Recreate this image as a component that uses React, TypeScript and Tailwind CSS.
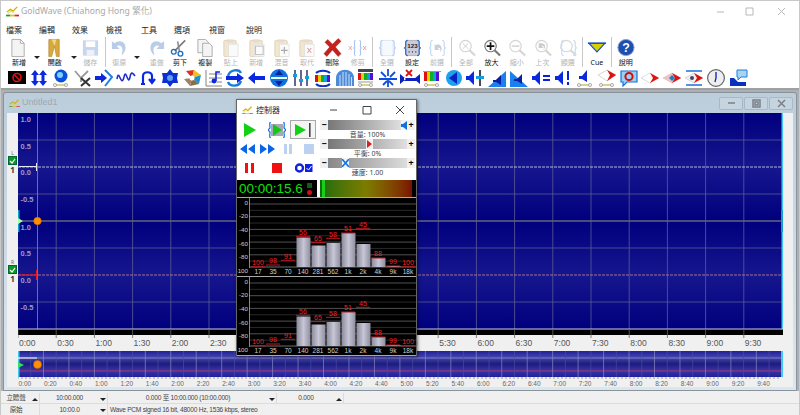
import type { ReactNode } from 'react';

const Logo = ({ size = 12 }: { size?: number }) => (
  <svg width={size} height={size * 0.8} viewBox="0 0 15 12">
    <path d="M1 7 L5 4 L8 6 L13 1" stroke="#d8b000" strokeWidth="1.6" fill="none" />
    <path d="M2 9 L6 6 L9 8" stroke="#e8d040" strokeWidth="1" fill="none" />
    <rect x="0" y="10" width="5" height="2" fill="#1fa01f" />
    <rect x="5" y="10" width="5" height="2" fill="#e8c000" />
    <rect x="10" y="10" width="5" height="2" fill="#e02020" />
  </svg>
);

const Page = ({ c = '#888', f = '#fff' }: { c?: string; f?: string }) => (
  <path d="M3 1 H12 L16 5 V19 H3 Z M12 1 V5 H16" fill={f} stroke={c} strokeWidth="0.8" />
);

const Clip = ({ inner }: { inner?: ReactNode }) => (
  <g>
    <rect x="3" y="2" width="13" height="17" rx="1" fill="#f1e6cf" stroke="#e0d4bb" />
    <rect x="6" y="1" width="7" height="3" fill="#e4dccb" />
    <rect x="8" y="6" width="10" height="13" fill="#fafafa" stroke="#ddd" strokeWidth="0.7" />
    {inner}
  </g>
);

const Braces = ({ c }: { c: string }) => (
  <path d="M6 2 C3 2 4 5 4 8 C4 10 2 10 2 10 C2 10 4 10 4 12 C4 15 3 18 6 18 M16 2 C19 2 18 5 18 8 C18 10 20 10 20 10 C20 10 18 10 18 12 C18 15 19 18 16 18" fill="none" stroke={c} strokeWidth="1.2" />
);

const Lens = ({ c, inner }: { c: string; inner?: ReactNode }) => (
  <g>
    <line x1="13" y1="12" x2="19" y2="18" stroke={c} strokeWidth="2.2" />
    <circle cx="9" cy="8" r="6" fill="#fff" stroke={c} strokeWidth="1.2" />
    {inner}
  </g>
);

const tools: { label: string; off?: boolean; icon?: ReactNode; kind?: string; w?: string }[] = [
  { label: '新增', w: 'w-[25.4px]', icon: <Page c="#999" f="#f4f4f4" /> },
  { kind: 'dd', label: '', w: 'w-[10.3px]' },
  { label: '開啟', w: 'w-[25.4px]', icon: <g><path d="M4 1 H15 V19 H12 L10 8 L7 19 H4 Z" fill="#d9a93c" stroke="#a87e22" strokeWidth="0.6" /><path d="M7 1 L10 8 L12 1" fill="#f2d78a" /></g> },
  { kind: 'dd', label: '', w: 'w-[12.4px]' },
  { label: '儲存', off: true, w: 'w-[21px]', icon: <g><rect x="2" y="2" width="16" height="16" fill="#c6d6ee" /><rect x="5" y="3" width="10" height="6" fill="#fff" /><rect x="6" y="12" width="8" height="6" fill="#eef2f8" /></g> },
  { kind: 'sep', label: '', w: 'w-[9.5px]' },
  { label: '復原', off: true, w: 'w-[18px]', icon: <path d="M2 3 V11 H10 L7 8 C10 6 14 8 13 14 L12 18 C18 14 18 4 11 3 C8 3 6 4 5 5 Z" fill="#b9cce8" /> },
  { kind: 'dd', label: '', w: 'w-[18px]' },
  { label: '重做', off: true, w: 'w-[21px]', icon: <path d="M18 3 V11 H10 L13 8 C10 6 6 8 7 14 L8 18 C2 14 2 4 9 3 C12 3 14 4 15 5 Z" fill="#b9cce8" /> },
  { label: '剪下', w: 'w-[25.4px]', icon: <g><line x1="5" y1="13" x2="16" y2="2" stroke="#777" strokeWidth="1.6" /><line x1="10" y1="14" x2="8" y2="3" stroke="#888" strokeWidth="1.6" /><circle cx="4" cy="14" r="2.5" fill="none" stroke="#1c6fc0" strokeWidth="1.4" /><circle cx="11" cy="16" r="2.5" fill="none" stroke="#1c6fc0" strokeWidth="1.4" /></g> },
  { label: '複製', w: 'w-[25.4px]', icon: <g><path d="M2 1 H10 L13 4 V15 H2 Z" fill="#f4f4f4" stroke="#999" strokeWidth="0.8" /><path d="M7 5 H14 L17 8 V19 H7 Z" fill="#f4f4f4" stroke="#999" strokeWidth="0.8" /></g> },
  { label: '貼上', off: true, w: 'w-[25.4px]', icon: <Clip /> },
  { label: '新增', off: true, w: 'w-[25.4px]', icon: <Clip inner={<rect x="9" y="8" width="8" height="9" fill="none" stroke="#bbb" />} /> },
  { label: '混音', off: true, w: 'w-[25.4px]', icon: <Clip inner={<path d="M13 9 V16 M9.5 12.5 H16.5" stroke="#aaa" strokeWidth="1.2" />} /> },
  { label: '取代', off: true, w: 'w-[25.4px]', icon: <Clip inner={<path d="M11 10 L15 15 M15 10 L11 15" stroke="#e0a0a0" strokeWidth="1.2" />} /> },
  { label: '刪除', w: 'w-[25.4px]', icon: <path d="M2 4 L5 1 L10 6 L16 0 L19 3 L13 9 L19 16 L16 19 L10 12 L4 19 L1 16 L7 9 Z" fill="#c8201c" stroke="#8a1410" strokeWidth="0.4" /> },
  { label: '修剪', off: true, w: 'w-[25.4px]', icon: <g><path d="M8 2 C6 2 7 6 7 9 L6 10 L7 11 C7 14 6 18 8 18 M12 2 C14 2 13 6 13 9 L14 10 L13 11 C13 14 14 18 12 18" fill="none" stroke="#a8c4ee" strokeWidth="1.2" /><path d="M1 8 L4 12 M4 8 L1 12 M16 8 L19 12 M19 8 L16 12" stroke="#eaa0a0" strokeWidth="1" /></g> },
  { kind: 'sep', label: '', w: 'w-[4px]' },
  { label: '全選', off: true, w: 'w-[25px]', icon: <g><rect x="5" y="2" width="12" height="16" fill="#f6f9fd" stroke="#dde6f4" /><Braces c="#b8d0f0" /></g> },
  { label: '設定', w: 'w-[25px]', icon: <g><rect x="4" y="2" width="14" height="16" rx="1" fill="#ccd" stroke="#778" strokeWidth="0.5" /><text x="11" y="10" textAnchor="middle" fontSize="6.5" fontWeight="700" fill="#223" fontFamily="Liberation Sans">123</text><path d="M7 14 H8 M10.5 14 H11.5 M14 14 H15" stroke="#223" strokeWidth="1.4" /><Braces c="#1768d8" /></g> },
  { label: '前選', off: true, w: 'w-[25px]', icon: <g><path d="M8 6 V12 H13 L11 10 C13 9 15 11 14 15 C17 11 15 6 11 6 L10 7 Z" fill="#c9cfd8" /><Braces c="#c4d8f4" /></g> },
  { kind: 'sep', label: '', w: 'w-[4px]' },
  { label: '全部', off: true, w: 'w-[25.4px]', icon: <Lens c="#d4d4d4" inner={<path d="M6 5 L12 11 M12 5 L6 11" stroke="#ccc" strokeWidth="1" />} /> },
  { label: '放大', w: 'w-[25.4px]', icon: <Lens c="#777" inner={<path d="M9 4 V12 M5 8 H13" stroke="#111" strokeWidth="1.8" />} /> },
  { label: '縮小', off: true, w: 'w-[25.4px]', icon: <Lens c="#d4d4d4" inner={<path d="M5 8 H13" stroke="#ccc" strokeWidth="1.4" />} /> },
  { label: '上次', off: true, w: 'w-[25.4px]', icon: <Lens c="#d4d4d4" inner={<path d="M6 5 V10 H11 L9 8 C11 7 12 9 11 12 C14 9 13 5 9 5 Z" fill="#ccc" />} /> },
  { label: '顯選', off: true, w: 'w-[25.4px]', icon: <g><Lens c="#d8d8d8" /><Braces c="#c8daf4" /></g> },
  { kind: 'sep', label: '', w: 'w-[4px]' },
  { label: 'Cue', w: 'w-[25px]', icon: <g><path d="M2 5 H19 L10.5 14 Z" fill="#d8d000" stroke="#1a50c8" strokeWidth="1.2" /><path d="M1 5 H20" stroke="#1a50c8" strokeWidth="1.6" /></g> },
  { kind: 'sep', label: '', w: 'w-[4px]' },
  { label: '說明', w: 'w-[25px]', icon: <g><circle cx="10.5" cy="9.5" r="8.5" fill="#1c4fb0" stroke="#8aa0c8" /><text x="10.5" y="14" textAnchor="middle" fontSize="13" fontWeight="700" fill="#fff" fontFamily="Liberation Sans">?</text></g> },
];

const B = '#0a28e0';
const Spk = ({ x = 3 }: { x?: number }) => <path d={`M${x} 7 H${x + 3} L${x + 8} 2 V16 L${x + 3} 11 H${x} Z`} fill={B} />;
const Base = () => <g><line x1="4" y1="16" x2="15" y2="16" stroke="#c8c060" strokeWidth="1.4" /><circle cx="4" cy="16" r="1.6" fill="#eee" stroke="#888" strokeWidth="0.6" /><circle cx="15" cy="16" r="1.6" fill="#eee" stroke="#888" strokeWidth="0.6" /></g>;
const Rainbow = ({ y = 5, h = 6 }: { y?: number; h?: number }) => (
  <g>
    <rect x="2" y={y} width="3" height={h} fill="#e01010" />
    <rect x="5" y={y} width="3" height={h} fill="#e8d000" />
    <rect x="8" y={y} width="3" height={h} fill="#10b020" />
    <rect x="11" y={y} width="3" height={h} fill="#10a0e0" />
    <rect x="14" y={y} width="3" height={h} fill="#5010d0" />
  </g>
);
const Diamond = ({ a, b }: { a: string; b: string }) => <g><path d="M1 9 L10 4 L19 9 L10 14 Z" fill={a} stroke="#bbb" strokeWidth="0.5" /><path d="M10 4 L19 9 L10 14 L13 9 Z" fill={b} /></g>;

const strip: ReactNode[] = [
  <g><rect x="1" y="2" width="18" height="13" fill="#000" /><circle cx="10" cy="8.5" r="4" fill="none" stroke="#e01010" strokeWidth="1.6" /><path d="M7.5 6 L12.5 11" stroke="#e01010" strokeWidth="1.6" /></g>,
  <g><path d="M6 1 L10 6 H7.5 V12 H10 L6 17 L2 12 H4.5 V6 H2 Z M14 1 L18 6 H15.5 V12 H18 L14 17 L10 12 H12.5 V6 H10 Z" fill={B} /></g>,
  <g><circle cx="10" cy="7" r="6.5" fill="#0a50e0" /><circle cx="9" cy="6" r="3" fill="#80d0ff" /><Base /></g>,
  <g><path d="M3 2 L9 9 L16 2 M9 9 V13" stroke="#999" strokeWidth="1.8" fill="none" /><path d="M9 9 L18 17 M18 9 L9 17" stroke="#333" strokeWidth="2" /></g>,
  <g><path d="M1 7 H7 V4 L13 9 L7 14 V11 H1 Z" fill={B} /><path d="M11 1 L18 8 L11 17" stroke="#2080e0" strokeWidth="2" fill="none" /></g>,
  <path d="M1 10 C3 -2 5 20 8 8 C10 -2 12 18 14 8 C15 2 17 4 19 7" stroke="#2030c8" strokeWidth="1.6" fill="none" />,
  <path d="M5 15 V7 C5 2 14 2 14 7 V12 M11 10 L14 14 L17 10 M3 15 H7" stroke={B} strokeWidth="2.2" fill="none" />,
  <g><path d="M10 0 L13 4 L18 4 L17 9 L18 14 L13 14 L10 18 L7 14 L2 14 L3 9 L2 4 L7 4 Z" fill="#0a30d0" /><circle cx="10" cy="9" r="3" fill="#60a0f0" /></g>,
  <g><path d="M10 9 L4 2 L12 1 Z" fill="#e03020" /><path d="M10 9 L12 1 L19 6 Z" fill="#f0c020" /><path d="M10 9 L19 6 L17 15 Z" fill="#2090d0" /><path d="M10 9 L17 15 L8 17 Z" fill="#807050" /><path d="M10 9 L8 17 L2 10 Z" fill="#a08060" /><circle cx="10" cy="9" r="2.5" fill="#fff" /></g>,
  <g><path d="M2 1 V17 H18 M5 5 H18 M5 9 H18 M5 13 H18" stroke="#666" strokeWidth="0.8" fill="none" /><circle cx="10" cy="12" r="2.4" fill={B} /><path d="M12 12 V3 H16" stroke={B} strokeWidth="1.6" fill="none" /></g>,
  <g><path d="M3 7 C5 0 14 0 16 4 M16 12 C14 18 5 18 3 13" stroke="#1080e0" strokeWidth="2.4" fill="none" /><path d="M1 7 H12 V4 L19 9 L12 14 V11 H1 Z" fill={B} /></g>,
  <path d="M1 9 L8 3 V7 H18 V11 H8 V15 Z" fill={B} />,
  <g><circle cx="10" cy="9" r="9" fill="#1070e0" /><path d="M10 1 L14 6 H6 Z M10 17 L14 12 H6 Z" fill="#0a20a0" /><rect x="2" y="8" width="16" height="2" fill="#dff" /></g>,
  <g><path d="M4 1 V17 M10 1 V17 M16 1 V17" stroke="#202860" strokeWidth="1.4" /><rect x="2" y="5" width="4" height="3" fill="#10a0e0" /><rect x="8" y="10" width="4" height="3" fill="#10a0e0" /><rect x="14" y="7" width="4" height="3" fill="#10a0e0" /></g>,
  <g><path d="M3 4 C6 1 14 1 17 4 M3 15 C6 18 14 18 17 15" stroke="#1030c0" strokeWidth="2" fill="none" /><Rainbow y={6} h={7} /></g>,
  <g><path d="M1 17 V9 C1 -2 19 -2 19 9 V17 Z" fill="#4a8ad8" /><path d="M5 17 V6 M8 17 V3 M11 17 V3 M14 17 V5 M16.5 17 V8" stroke="#dfeaff" strokeWidth="0.9" /></g>,
  <g><rect x="2" y="0" width="15" height="3" fill="#445" /><Rainbow y={4} h={7} /><path d="M2 13 H17" stroke="#999" /><Base /></g>,
  <path d="M10 0 V7 M3 3 L8 8 M17 3 L12 8 M1 10 H19 M10 11 V18 M5 16 L9 12 M15 16 L11 12" stroke="#1050d8" strokeWidth="1.8" />,
  <g><path d="M0 5 V15 L6 10 Z M20 5 V15 L14 10 Z M4 9 H16 V12 H4 Z" fill="#0a20c0" /><path d="M6 1 L12 7 M12 1 L6 7" stroke="#e01010" strokeWidth="1.8" /></g>,
  <g><rect x="1" y="2" width="18" height="1" fill="#999" /><Rainbow y={3} h={9} /><Base /></g>,
  <g><circle cx="10" cy="9" r="8" fill="#1ca0f0" /><path d="M5 9 L13 3 V15 Z" fill="#0a20c0" /></g>,
  <g><Spk x={0} /><path d="M14 1 V17" stroke="#334" strokeWidth="1.8" /><rect x="10" y="7" width="8" height="3" fill="#10a0e0" /></g>,
  <g><path d="M1 18 L19 2 V18 Z" fill="#1a80f0" /><path d="M6 11 H9 L14 6 V16 L9 13 H6 Z" fill="#0a20a0" /></g>,
  <g><path d="M1 2 L19 18 H1 Z" fill="#1a80f0" /><path d="M5 10 H8 L13 5 V15 L8 12 H5 Z" fill="#0a20a0" /></g>,
  <g><Spk x={1} /><path d="M12 7 H19 M12 11 H19" stroke="#0a20e0" strokeWidth="1.8" /></g>,
  <g><Spk x={2} /><path d="M15 2 V11 M15 13 V16" stroke="#0a20e0" strokeWidth="2" /></g>,
  <g><path d="M4 7 H7 L12 1 V13 L7 10 H4 Z" fill={B} /><Base /></g>,
  <g><path d="M1 6 L10 1 L19 6 L10 12 Z" fill="#fff" stroke="#aaa" strokeWidth="0.5" /><path d="M10 1 L19 6 L10 12 L13 6 Z" fill="#e01010" /><Base /></g>,
  <g><path d="M2 2 H18 V13 H8 L4 17 V13 H2 Z" fill="#9ad0f4" stroke="#1a70d8" strokeWidth="1.2" /><circle cx="10" cy="7.5" r="3.6" fill="none" stroke="#d01010" strokeWidth="2" /></g>,
  <Diamond a="#fff" b="#e01010" />,
  <g><Diamond a="#f4c0c0" b="#e01010" /><path d="M7 9 L10 6 L13 9 L10 12 Z" fill="#2080c0" /></g>,
  <g><path d="M2 2 H18 M2 16 H18" stroke="#1a70e0" strokeWidth="1.4" /><Diamond a="#eee" b="#e01010" /><circle cx="8" cy="9" r="2" fill="#446" /></g>,
  <g><circle cx="10" cy="9" r="8.4" fill="#eee" stroke="#666" strokeWidth="1.2" /><path d="M10 3 V9 L9 13" stroke="#1030c0" strokeWidth="1.4" fill="none" /></g>,
  <g><path d="M9 1 H19 V8 H13 L10 11 V8 H9 Z" fill="#a8d4f4" stroke="#1a80d8" /><path d="M2 9 V17 H18 V13 H10 L6 9 Z" fill="#0a30c0" /></g>,
];

const Tri = ({ up }: { up?: boolean }) => (
  <span className={`inline-block w-0 h-0 border-x-[3px] border-x-transparent ${up ? 'border-b-[3px] border-b-[#222]' : 'border-t-[3px] border-t-[#222]'}`} />
);

function Toolbar() {
  return (
    <div className="flex h-[31px] pl-[5.3px] items-start">
      {tools.map((t, i) => {
        if (t.kind === 'sep') return <div key={i} className={`${t.w} h-[30px] flex justify-center`}><div className="w-px h-full bg-[#c8c8c8]" /></div>;
        if (t.kind === 'dd') return <div key={i} className={`${t.w} h-[22px] flex items-end justify-center`}><Tri /></div>;
        return (
          <div key={i} className={`${t.w} flex flex-col items-center`}>
            <svg width="19" height="20" viewBox="0 0 20 20" className="shrink-0 mt-px">{t.icon}</svg>
            <span className={`text-[7px] leading-[9px] whitespace-nowrap ${t.off ? 'text-[#b4b4b4]' : 'text-[#111]'}`}>{t.label}</span>
          </div>
        );
      })}
    </div>
  );
}

const menuItems: [string, string][] = [
  ['檔案', 'w-[33px]'], ['編輯', 'w-[33px]'], ['效果', 'w-[34px]'], ['檢視', 'w-[35px]'],
  ['工具', 'w-[33px]'], ['選項', 'w-[35px]'], ['視窗', 'w-[37px]'], ['說明', 'w-[33px]'],
];

// main wave display, coordinates are page pixels
function WaveView() {
  const cols = Array.from({ length: 21 }, (_, i) => 18 + i * 38.2);
  const rows = [140, 194, 248, 302];
  const scale: [string, number][] = [['1.0', 122], ['0.5', 148.5], ['0.0', 175], ['-0.5', 202], ['1.0', 229.5], ['0.5', 256], ['0.0', 283], ['-0.5', 310]];
  const times = ['0:00', '0:30', '1:00', '1:30', '2:00', '2:30', '3:00', '3:30', '4:00', '4:30', '5:00', '5:30', '6:00', '6:30', '7:00', '7:30', '8:00', '8:30', '9:00', '9:30'];
  return (
    <svg width="765" height="238" viewBox="18 113 765 238" className="block shrink-0">
      <defs>
        <linearGradient id="ch" x1="0" y1="0" x2="0" y2="1">
          <stop offset="0" stopColor="#00007e" />
          <stop offset="0.5" stopColor="#16168e" />
          <stop offset="1" stopColor="#00007e" />
        </linearGradient>
      </defs>
      <rect x="18" y="113" width="765" height="108" fill="url(#ch)" />
      <rect x="18" y="221" width="765" height="108" fill="url(#ch)" />
      {cols.slice(1, 20).map((x) => <line key={x} x1={x} y1="113" x2={x} y2="329" stroke="#5c5c94" strokeWidth="0.8" />)}
      {rows.map((y) => <line key={y} x1="18" y1={y} x2="782" y2={y} stroke="#5c5c94" strokeWidth="0.8" />)}
      <line x1="18" y1="221" x2="782" y2="221" stroke="#66667a" strokeWidth="1.5" />
      <line x1="18" y1="167" x2="782" y2="167" stroke="#dcdcec" strokeWidth="0.8" strokeDasharray="3 1" />
      <line x1="18" y1="275" x2="782" y2="275" stroke="#c88098" strokeWidth="0.8" strokeDasharray="3 1" />
      <line x1="37.5" y1="113" x2="37.5" y2="329" stroke="#a88070" strokeWidth="0.8" />
      {scale.map(([s, y], i) => <text key={i} x="20.5" y={y} fontSize="7.5" fill="#9a9ac8" fontFamily="Liberation Sans" fontWeight="700">{s}</text>)}
      <path d="M19 166.5 H36 M36.5 163 V171" stroke="#e8e8f0" strokeWidth="1" />
      <path d="M19 275 H36" stroke="#e01818" strokeWidth="1.2" />
      <path d="M36.5 270 V280" stroke="#e01818" strokeWidth="1.2" />
      <rect x="18" y="210" width="1.5" height="22" fill="#10a0d0" />
      <path d="M18 218 L23 221 L18 224 Z" fill="#a0ffa0" />
      <circle cx="37.5" cy="221" r="3.8" fill="#ff9000" stroke="#d06000" strokeWidth="0.6" />
      <rect x="781.5" y="113" width="1.5" height="216" fill="#40c8f0" />
      <rect x="781" y="210" width="2" height="22" fill="#10a0d0" />
      <rect x="18" y="328.5" width="765" height="1" fill="#c8c8d8" />
      <rect x="18" y="329.5" width="765" height="5.5" fill="#000" />
      {cols.slice(0, 20).map((x) => <line key={x} x1={x} y1="329" x2={x} y2="338" stroke="#666" strokeWidth="0.8" />)}
      {times.map((t, i) => <text key={t} x={19 + i * 38.2} y="345.5" fontSize="8.5" fill="#555" fontFamily="Liberation Sans">{t}</text>)}
    </svg>
  );
}

function Overview() {
  const fine = Array.from({ length: 60 }, (_, i) => 18 + i * 12.73);
  const ticks = Array.from({ length: 191 }, (_, i) => 18 + i * 4);
  const labels = ['0:00', '0:20', '0:40', '1:00', '1:20', '1:40', '2:00', '2:20', '2:40', '3:00', '3:20', '3:40', '4:00', '4:20', '4:40', '5:00', '5:20', '5:40', '6:00', '6:20', '6:40', '7:00', '7:20', '7:40', '8:00', '8:20', '8:40', '9:00', '9:20', '9:40'];
  return (
    <svg width="765" height="36" viewBox="18 351 765 36" className="block shrink-0">
      <defs>
        <linearGradient id="ov" x1="0" y1="0" x2="0" y2="1">
          <stop offset="0" stopColor="#20209a" />
          <stop offset="0.25" stopColor="#4444ac" />
          <stop offset="0.5" stopColor="#1c1c7e" />
          <stop offset="0.75" stopColor="#3636a8" />
          <stop offset="1" stopColor="#20209a" />
        </linearGradient>
      </defs>
      <rect x="18" y="351" width="765" height="26" fill="url(#ov)" />
      <line x1="18" y1="358" x2="782" y2="358" stroke="#7c7cc4" strokeWidth="1" />
      <line x1="18" y1="371" x2="782" y2="371" stroke="#b8305c" strokeWidth="1" />
      {fine.map((x, i) => <line key={i} x1={x} y1="351" x2={x} y2="377" stroke={i % 2 ? '#4a4aa4' : '#8888c4'} strokeWidth="0.7" />)}
      <rect x="18" y="351" width="1.5" height="26" fill="#40c8f0" />
      <rect x="781" y="351" width="2" height="26" fill="#40c8f0" />
      <path d="M18 358 H37" stroke="#fff" strokeWidth="1" />
      <path d="M18 362 L24 365 L18 368 Z" fill="#30e060" />
      <circle cx="37.5" cy="364.5" r="4" fill="#ff9000" stroke="#d06000" strokeWidth="0.6" />
      {ticks.map((x) => <line key={x} x1={x} y1="377" x2={x} y2="379" stroke="#777" strokeWidth="0.7" />)}
      {labels.map((l, i) => <text key={l} x={18.5 + i * 25.47} y="385.5" fontSize="6.5" fill="#666" fontFamily="Liberation Sans">{l}</text>)}
    </svg>
  );
}

const bands = ['17', '35', '70', '140', '281', '562', '1k', '2k', '4k', '9k', '18k'];
const tops = [267, 267, 267, 237.5, 245.5, 243, 233, 244, 258, 266, 267];
const peaks = [266.8, 265, 260.3, 236.3, 242.7, 238.3, 233, 228.3, 258, 266, 266.8];
const vals = ['100', '98', '91', '56', '65', '58', '51', '45', '88', '99', '100'];

function Spectrum({ off }: { off: number }) {
  const dbs = [0, -20, -40, -60, -80, -100];
  const lines = Array.from({ length: 10 }, (_, i) => 204 + i * 6.35);
  return (
    <g transform={`translate(0 ${off})`}>
      <rect x="236" y="197" width="181" height="79" fill="#000" />
      {lines.map((y, i) => <line key={i} x1="249" y1={y} x2="416" y2={y} stroke={i % 2 ? '#333' : '#666'} strokeWidth="0.8" />)}
      <line x1="249.5" y1="197" x2="249.5" y2="268" stroke="#aaa" strokeWidth="0.8" />
      <line x1="249" y1="267" x2="416" y2="267" stroke="#888" strokeWidth="0.8" />
      {tops.map((t, i) => t < 267 && <rect key={i} x={251 + i * 15 + 0.5} y={t} width="14" height={267 - t} fill="url(#bar)" />)}
      {peaks.map((p, i) => <line key={i} x1={251 + i * 15} y1={p} x2={265 + i * 15} y2={p} stroke="#c01820" strokeWidth="1" />)}
      {vals.map((v, i) => <text key={i} x={258 + i * 15} y={peaks[i] - 1.8} textAnchor="middle" fontSize="7" fill="#ee2028" fontFamily="Liberation Sans">{v}</text>)}
      {dbs.map((d, i) => <text key={d} x="248" y={204.5 + i * 13.7} textAnchor="end" fontSize="6.2" fill="#d0d0d0" fontFamily="Liberation Sans">{d}</text>)}
      {bands.map((b, i) => <text key={b} x={258 + i * 15} y="274" textAnchor="middle" fontSize="6.5" fill="#d0d0d0" fontFamily="Liberation Sans">{b}</text>)}
      <rect x="236.5" y="197.5" width="180" height="79" fill="none" stroke="#a8a8a8" strokeWidth="1" />
    </g>
  );
}

function Slider({ label, pos, thumb, track }: { label: string; pos: string; thumb: ReactNode; track: string }) {
  return (
    <div className="flex flex-col items-stretch h-[19px]">
      <div className="flex h-[10px] items-stretch">
        <span className="w-[8px] bg-[#f0f0f0] text-[9px] leading-[9px] font-bold text-center text-black">−</span>
        <div className={`relative flex-1 ${track}`}>
          <span className={`absolute top-0 h-[10px] w-[7px] bg-[#f2f2f2] flex items-center justify-center ${pos}`}>{thumb}</span>
        </div>
        <span className="w-[8px] bg-[#f0f0f0] text-[9px] leading-[9px] font-bold text-center text-black">+</span>
      </div>
      <span className="text-[7px] leading-[9px] text-center text-[#444]">{label}</span>
    </div>
  );
}

const Ic = ({ w, h = 16, children }: { w: string; h?: number; children: ReactNode }) => (
  <div className={`${w} flex items-center justify-center`}>
    <svg width="18" height={h} viewBox="0 0 18 16">{children}</svg>
  </div>
);

function Controller() {
  return (
    <div className="absolute left-[235px] top-[98px] w-[181px] h-[257px] bg-white border border-[#666] shadow-[1px_1px_3px_rgba(0,0,0,0.5)] flex flex-col">
      <div className="h-[20px] shrink-0 flex items-center pl-[5px]">
        <Logo size={11} />
        <span className="ml-[3px] text-[8px] text-[#222]">控制器</span>
        <svg width="90" height="12" viewBox="0 0 90 12" className="ml-auto">
          <path d="M4 6 H11 M37 2.500 H45 V10 H37 Z M70 2 L78 10 M78 2 L70 10" stroke="#444" fill="none" strokeWidth="1" />
        </svg>
      </div>
      <div className="h-[60px] shrink-0 flex">
        <div className="w-[83px] shrink-0 flex flex-col">
          <div className="flex h-[19px]">
            <Ic w="w-[26px]"><path d="M3 1 L15 8 L3 15 Z" fill="#14d014" /></Ic>
            <Ic w="w-[27px]"><g><rect x="3" y="2" width="12" height="12" fill="#a8a8b8" /><path d="M5 2 L14 8 L5 14 Z" fill="#14c814" /><path d="M3 0 C1 0 2 4 2 6 L0 8 L2 10 C2 12 1 16 3 16 M15 0 C17 0 16 4 16 6 L18 8 L16 10 C16 12 17 16 15 16" stroke="#1070e8" fill="none" strokeWidth="1.2" /></g></Ic>
            <div className="w-[26px] border border-[#a8a8a8] bg-[#f4f4f4] flex items-center justify-center">
              <svg width="18" height="14" viewBox="0 0 18 14"><path d="M1 1 L12 7 L1 13 Z" fill="#14d014" /><rect x="15" y="0" width="1.600" height="14" fill="#444" /></svg>
            </div>
          </div>
          <div className="flex h-[19px] pl-px items-center">
            <Ic w="w-[20px]"><path d="M1 8 L8 3 V13 Z M9 8 L16 3 V13 Z" fill="#0a64e8" /></Ic>
            <Ic w="w-[19px]"><path d="M1 3 L8 8 L1 13 Z M9 3 L16 8 L9 13 Z" fill="#0a64e8" /></Ic>
            <Ic w="w-[21px]"><path d="M5 3 H8 V13 H5 Z M10 3 H13 V13 H10 Z" fill="#bcd0f0" /></Ic>
            <Ic w="w-[21px]"><rect x="4" y="3" width="10" height="10" fill="#bcd0f0" /></Ic>
          </div>
          <div className="flex h-[19px] items-center">
            <Ic w="w-[26px]"><path d="M4 3 H7 V13 H4 Z M10 3 H13 V13 H10 Z" fill="#f01010" /></Ic>
            <Ic w="w-[27px]"><rect x="4" y="3" width="10" height="10" fill="#f01010" /></Ic>
            <Ic w="w-[27px]"><g><circle cx="4.500" cy="8" r="3.500" fill="none" stroke="#1020e0" strokeWidth="2.400" /><rect x="10" y="4" width="7.500" height="8" fill="#1020e0" /><path d="M11.500 8 L13.500 10 L16.500 6" stroke="#fff" fill="none" /></g></Ic>
          </div>
        </div>
        <div className="flex-1 flex flex-col pr-px">
          <Slider label="音量: 100%" pos="left-[73px]" track="bg-linear-to-r from-[#777] to-[#e8e8e8]" thumb={<svg width="7" height="9" viewBox="0 0 7 9"><path d="M0 3 H2 L6 0 V9 L2 6 H0 Z" fill="#1070e0" /></svg>} />
          <Slider label="平衡: 0%" pos="left-[38px]" track="bg-linear-to-r from-[#777] to-[#e0e0e0]" thumb={<svg width="5" height="8" viewBox="0 0 5 8"><path d="M0 0 L5 4 L0 8 Z" fill="#d82020" /></svg>} />
          <Slider label="速度: 1.00" pos="left-[14px]" track="bg-linear-to-r from-[#888] to-[#ddd]" thumb={<svg width="7" height="8" viewBox="0 0 7 8"><path d="M0 0 L7 8 M7 0 L0 8" stroke="#1070e0" strokeWidth="1.500" /></svg>} />
        </div>
      </div>
      <div className="h-[17px] shrink-0 flex">
        <div className="w-[80px] bg-black flex items-center pl-[2px]">
          <span className="font-['Liberation_Sans',sans-serif] text-[13.500px] leading-none text-[#10e010]">00:00:15.6</span>
          <span className="ml-[4px] flex flex-col gap-[2px] items-center">
            <span className="w-[5px] h-[5px] bg-[#106010]" />
            <span className="w-[5px] h-[5px] rounded-full bg-[#d01010]" />
          </span>
        </div>
        <div className="w-[3px] bg-white" />
        <div className="flex-1 flex bg-black">
          <div className="flex-1 relative bg-linear-to-r from-[#0c6c0c] via-[#7c7c00] to-[#7a1000]">
            <span className="absolute left-[2px] top-0 h-full w-[3px] bg-[#18d018]" />
          </div>
          <div className="w-[4px]" />
        </div>
      </div>
      <svg width="179" height="159" viewBox="237 197 179 159" className="block shrink-0">
        <defs>
          <linearGradient id="bar" x1="0" y1="0" x2="1" y2="0">
            <stop offset="0" stopColor="#8a8a9c" />
            <stop offset="0.5" stopColor="#c6c6d6" />
            <stop offset="1" stopColor="#8e8ea0" />
          </linearGradient>
        </defs>
        <Spectrum off={0} />
        <Spectrum off={79} />
      </svg>
    </div>
  );
}

const Check = () => (
  <span className="w-[9px] h-[9px] bg-[#0a9a20] border border-[#063] flex items-center justify-center">
    <svg width="7" height="6" viewBox="0 0 7 6"><path d="M1 3 L3 5 L6 1" stroke="#fff" strokeWidth="1.200" fill="none" /></svg>
  </span>
);

function StatusCell({ w, text, tri, up, align = 'justify-center' }: { w: string; text: string; tri?: boolean; up?: boolean; align?: string }) {
  return (
    <div className={`${w} relative flex items-center ${align} border-r border-[#dcdcdc] pr-[8px]`}>
      <span className="whitespace-nowrap">{text}</span>
      {tri && <span className="absolute right-[1px] top-[3px] flex h-[6px] items-center"><Tri up={up} /></span>}
    </div>
  );
}

export default function App() {
  return (
    <div className="relative w-[800px] h-[415px] overflow-hidden flex flex-col bg-white border-t border-x border-[#c8c8c8] font-['Noto_Sans','Noto_Sans_CJK_TC',sans-serif]">
      <div className="h-[21px] shrink-0 flex items-center pl-[5px]">
        <Logo size={13} />
        <span className="ml-[2px] text-[8.600px] text-[#a8a8a8] whitespace-nowrap">GoldWave (Chiahong Hong 繁化)</span>
        <svg width="80" height="12" viewBox="0 0 80 12" className="ml-auto mr-[2px]">
          <path d="M0 6 H7 M29 2 H36 V9 H29 Z M61 2 L68 9 M68 2 L61 9" stroke="#b8b8b8" fill="none" />
        </svg>
      </div>
      <div className="h-[15px] shrink-0 flex items-center pl-[5px] text-[8px] text-[#222]">
        {menuItems.map(([m, w]) => <span key={m} className={w}>{m}</span>)}
      </div>
      <Toolbar />
      <div className="h-[22px] shrink-0 flex items-center pl-[5px] border-b-2 border-[#a0a0a0]">
        {strip.map((s, i) => (
          <div key={i} className="w-[21.850px] flex justify-center">
            <svg width="20" height="18" viewBox="0 0 20 18" className="shrink-0">{s}</svg>
          </div>
        ))}
      </div>
      <div className="relative h-[301px] shrink-0 bg-[#aab0b6] pl-[2px] pr-[2px] pt-[2px]">
        <div className="h-[299px] rounded-t-[3px] bg-linear-to-b from-[#bccddb] to-[#dce6ee] border border-[#8a929a] flex flex-col">
          <div className="h-[20px] shrink-0 flex items-center pl-[5px] pr-[3px]">
            <Logo size={11} />
            <span className="ml-[2px] text-[9px] text-[#a0a8b0] font-['Liberation_Sans',sans-serif]">Untitled1</span>
            <div className="ml-auto flex gap-px">
              {['M3 5 H10', 'M3 2 H10 V9 H3 Z M5 4 H8 V7 H5 Z', 'M3 2 L10 9 M10 2 L3 9'].map((d) => (
                <div key={d} className="w-[24px] h-[13px] rounded-[2px] border border-[#a8b8c6] bg-[#c6d4e0] flex items-center justify-center">
                  <svg width="13" height="11" viewBox="0 0 13 11"><path d={d} stroke="#7a8088" strokeWidth="1.500" fill="none" /></svg>
                </div>
              ))}
            </div>
          </div>
          <div className="mx-[3px] h-[274px] bg-[#f0f0f0] flex overflow-hidden">
            <div className="w-[11px] shrink-0 flex flex-col items-center pt-[38px] text-[#333]">
              <span className="text-[5px] leading-[5px] text-[#666]">L</span>
              <Check />
              <span className="text-[8px] leading-[9px] font-bold">1</span>
              <span className="mt-[86px] text-[5px] leading-[5px] text-[#666]">R</span>
              <Check />
              <span className="text-[8px] leading-[9px] font-bold">1</span>
            </div>
            <div className="flex flex-col">
              <WaveView />
              <Overview />
            </div>
          </div>
        </div>
      </div>
      <div className="flex-1 bg-[#f0f0f0] flex flex-col text-[6.600px] tracking-[-0.25px] text-[#444] font-['Liberation_Sans','Noto_Sans_CJK_TC',sans-serif] pt-[2px]">
        <div className="h-[11px] flex border-b border-[#dcdcdc]">
          <StatusCell w="w-[39px]" text="立體聲" tri up />
          <StatusCell w="w-[68px]" text="10:00.000" tri />
          <StatusCell w="w-[169px]" text="0.000 至 10:00.000 (10:00.000)" tri />
          <StatusCell w="w-[67px]" text="0.000" tri up />
        </div>
        <div className="h-[11px] flex">
          <StatusCell w="w-[39px]" text="原始" />
          <StatusCell w="w-[68px]" text="10:00.0" tri />
          <span className="ml-[2px] whitespace-nowrap leading-[11px]">Wave PCM signed 16 bit, 48000 Hz, 1536 kbps, stereo</span>
        </div>
      </div>
      <Controller />
    </div>
  );
}
